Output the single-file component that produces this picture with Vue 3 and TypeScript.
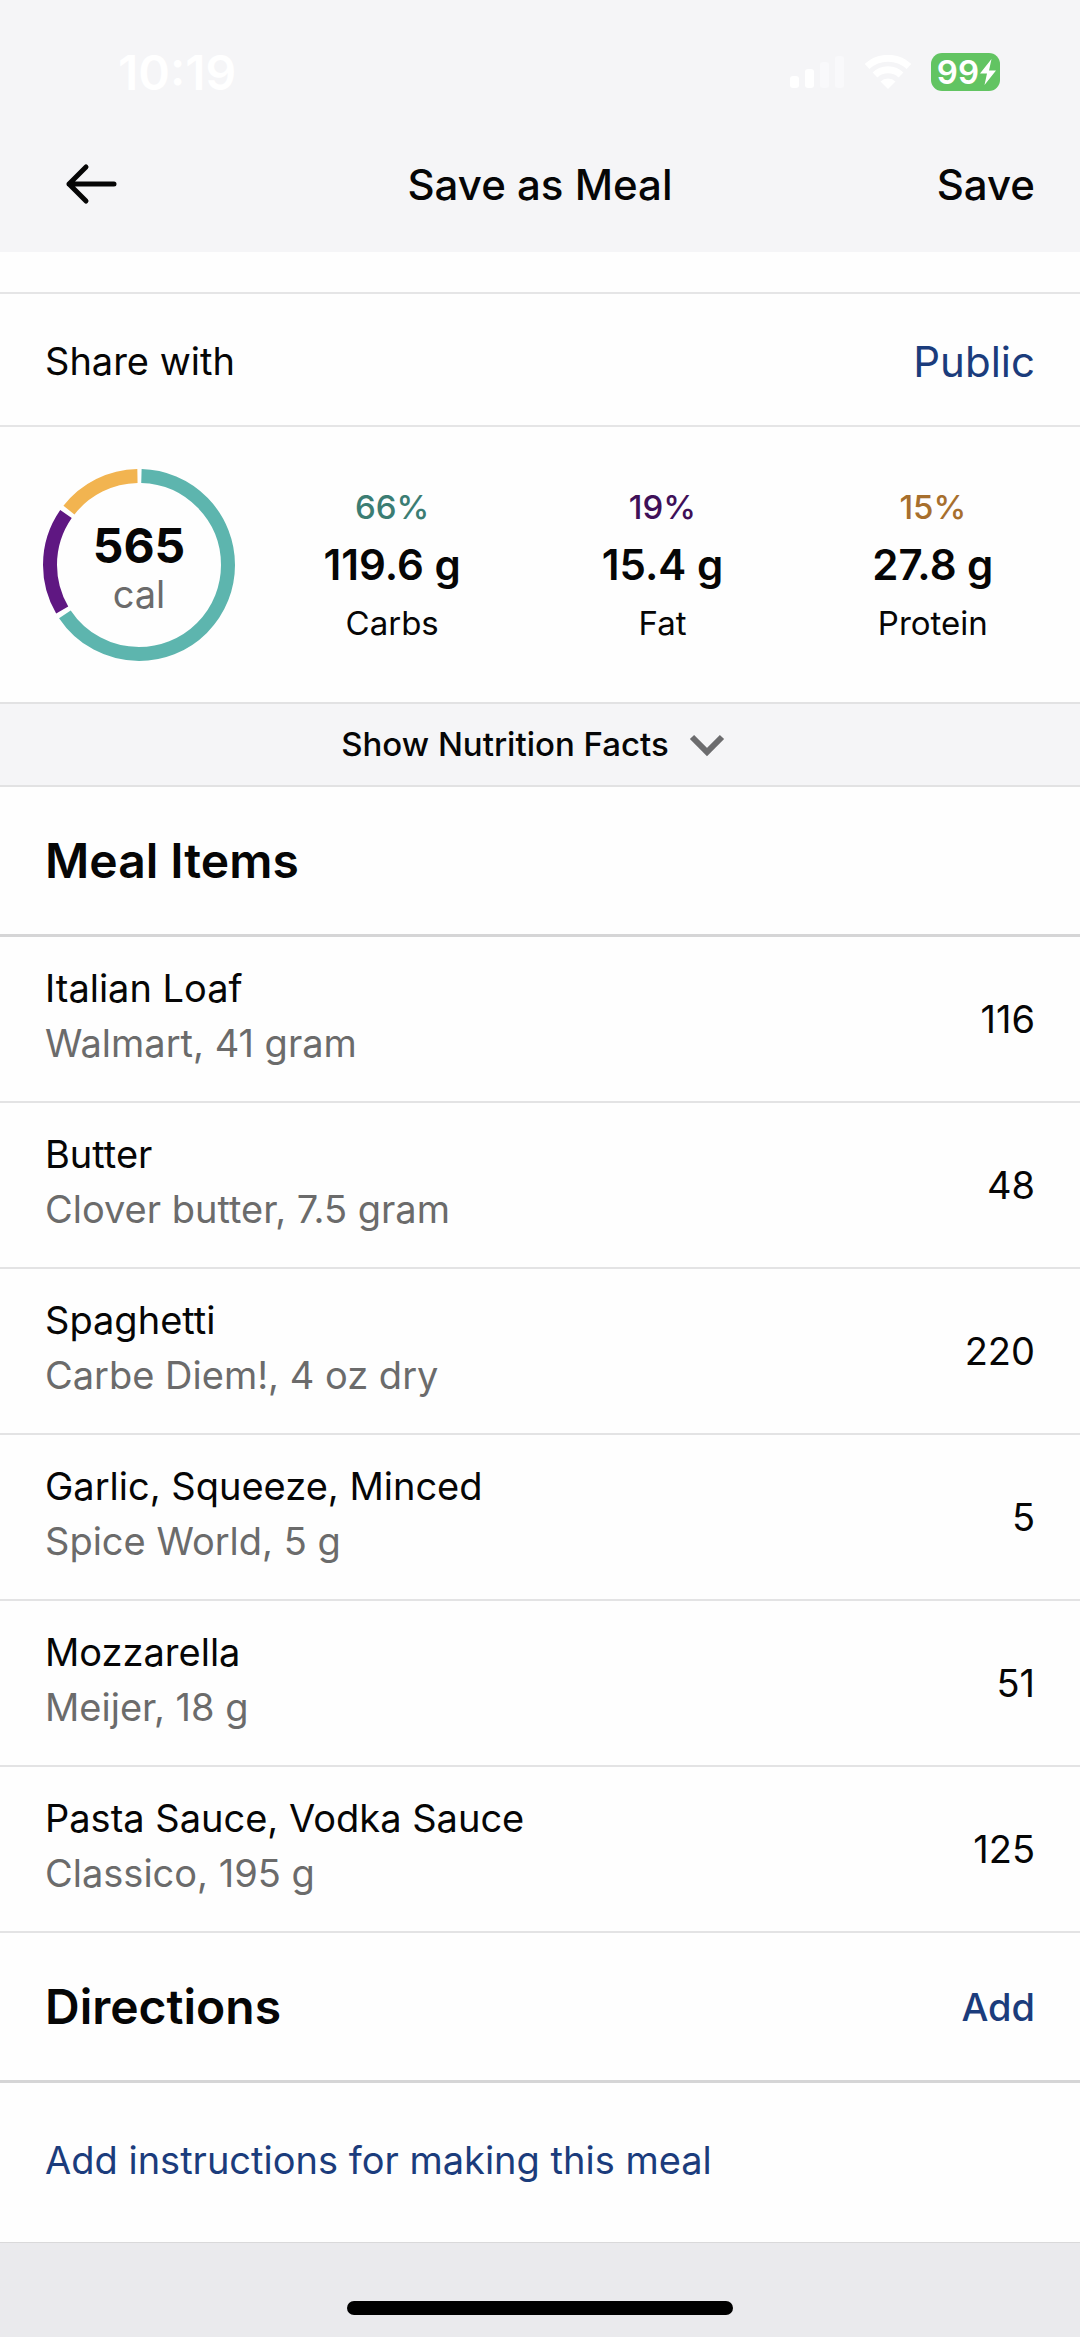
<script setup lang="ts">
import { computed, ref } from 'vue'

interface Macro {
  name: string
  percent: number
  grams: string
  tone: 'carbs' | 'fat' | 'protein'
}

interface MealItem {
  name: string
  detail: string
  calories: number
}

const calories = 565
const visibility = ref('Public')

const macros: Macro[] = [
  { name: 'Carbs', percent: 66, grams: '119.6 g', tone: 'carbs' },
  { name: 'Fat', percent: 19, grams: '15.4 g', tone: 'fat' },
  { name: 'Protein', percent: 15, grams: '27.8 g', tone: 'protein' },
]

const items: MealItem[] = [
  { name: 'Italian Loaf', detail: 'Walmart, 41 gram', calories: 116 },
  { name: 'Butter', detail: 'Clover butter, 7.5 gram', calories: 48 },
  { name: 'Spaghetti', detail: 'Carbe Diem!, 4 oz dry', calories: 220 },
  { name: 'Garlic, Squeeze, Minced', detail: 'Spice World, 5 g', calories: 5 },
  { name: 'Mozzarella', detail: 'Meijer, 18 g', calories: 51 },
  { name: 'Pasta Sauce, Vodka Sauce', detail: 'Classico, 195 g', calories: 125 },
]

const RADIUS = 89
const GAP = 5

// Each macro becomes one dash on the ring, with half a gap left at both ends.
const arcs = computed(() => {
  const length = 2 * Math.PI * RADIUS
  let start = 0
  return macros.map((m) => {
    const share = (m.percent / 100) * length
    const arc = {
      tone: m.tone,
      dash: `${share - GAP} ${length - share + GAP}`,
      offset: -(start + GAP / 2),
    }
    start += share
    return arc
  })
})
</script>

<template>
  <div class="screen">
    <header class="top">
      <div class="status">
        <span class="time">10:19</span>
        <div class="indicators">
          <svg class="signal" viewBox="0 0 56 34" aria-hidden="true">
            <rect x="1" y="21" width="9" height="12" rx="3" />
            <rect x="16" y="14" width="9" height="19" rx="3" />
            <rect class="off" x="31" y="7" width="9" height="26" rx="3" />
            <rect class="off" x="46" y="1" width="9" height="32" rx="3" />
          </svg>
          <svg class="wifi" viewBox="0 0 48 34" aria-hidden="true">
            <path d="M3 11.500A31 31 0 0 1 45 11.500" />
            <path d="M11 20A19 19 0 0 1 37 20" />
            <path class="dot" d="M24 34L16.500 26.500A11 11 0 0 1 31.500 26.500Z" />
          </svg>
          <span class="battery">
            99
            <svg class="bolt" viewBox="0 0 16 28" aria-hidden="true">
              <path d="M11.500 1L0 15.500H7L4.500 27L16 12.500H9Z" />
            </svg>
          </span>
        </div>
      </div>
      <nav class="nav">
        <button class="back" type="button" aria-label="Back">
          <svg viewBox="0 0 52 44" aria-hidden="true">
            <path d="M49 22H4M21 5L4 22L21 39" />
          </svg>
        </button>
        <h1 class="title">Save as Meal</h1>
        <button class="save" type="button">Save</button>
      </nav>
    </header>

    <main class="content">
      <section class="share">
        <span id="share-label" class="body">Share with</span>
        <button class="visibility" type="button" aria-describedby="share-label">{{ visibility }}</button>
      </section>

      <section class="summary">
        <div class="ring">
          <svg viewBox="0 0 192 192" aria-hidden="true">
            <circle
              v-for="arc in arcs"
              :key="arc.tone"
              :class="['arc', arc.tone]"
              cx="96"
              cy="96"
              :r="RADIUS"
              :stroke-dasharray="arc.dash"
              :stroke-dashoffset="arc.offset"
            />
          </svg>
          <div class="total">
            <strong>{{ calories }}</strong>
            <span>cal</span>
          </div>
        </div>
        <div class="macros">
          <div v-for="m in macros" :key="m.name" class="macro">
            <span :class="['percent', m.tone]">{{ m.percent }}%</span>
            <span class="grams">{{ m.grams }}</span>
            <span class="name">{{ m.name }}</span>
          </div>
        </div>
      </section>

      <button class="facts" type="button">
        Show Nutrition Facts
        <svg viewBox="0 0 64 32" aria-hidden="true">
          <path d="M17 8L32 23L47 8" />
        </svg>
      </button>

      <section>
        <div class="heading">
          <h2>Meal Items</h2>
        </div>
        <ul class="items">
          <li v-for="item in items" :key="item.name" class="item">
            <div class="label">
              <span class="body">{{ item.name }}</span>
              <span class="body muted">{{ item.detail }}</span>
            </div>
            <span class="body">{{ item.calories }}</span>
          </li>
        </ul>
      </section>

      <section>
        <div class="heading">
          <h2>Directions</h2>
          <button class="add" type="button">Add</button>
        </div>
        <button class="instructions" type="button">Add instructions for making this meal</button>
      </section>
    </main>

    <footer class="bottom">
      <div class="home"></div>
    </footer>
  </div>
</template>

<style>
body {
  margin: 0;
}
</style>

<style scoped>
.screen {
  display: flex;
  flex-direction: column;
  min-height: 100vh;
  background: #fefefe;
  color: #060606;
  font-family: Inter, "Liberation Sans", sans-serif;
  font-size: 38px;
}

button {
  margin: 0;
  padding: 0;
  border: 0;
  background: none;
  color: inherit;
  font: inherit;
  cursor: pointer;
}

svg {
  display: block;
}

.top {
  padding-bottom: 28px;
  background: #f5f5f7;
}

.status {
  display: flex;
  align-items: center;
  justify-content: space-between;
  height: 144px;
  padding: 0 80px 0 118px;
  box-sizing: border-box;
}

.time {
  color: #fff;
  font-size: 48px;
  font-weight: 600;
}

.indicators {
  display: flex;
  align-items: center;
  gap: 19px;
}

.signal {
  width: 56px;
  height: 34px;
  fill: #fff;
}

.signal .off {
  fill: #f9f9fb;
}

.wifi {
  width: 48px;
  height: 34px;
  fill: none;
  stroke: #fff;
  stroke-width: 7;
}

.wifi .dot {
  fill: #fff;
  stroke: none;
}

.battery {
  display: flex;
  align-items: center;
  gap: 1px;
  height: 38px;
  padding: 0 4px 0 6px;
  border-radius: 11px;
  background: #62c462;
  color: #fff;
  font-size: 33px;
  font-weight: 600;
}

.bolt {
  width: 16px;
  height: 28px;
  fill: #fff;
}

.nav {
  display: grid;
  grid-template-columns: 1fr auto 1fr;
  align-items: center;
  height: 80px;
  padding: 0 45px 0 65px;
}

.back svg {
  width: 52px;
  height: 44px;
  fill: none;
  stroke: #060606;
  stroke-width: 5;
  stroke-linecap: round;
  stroke-linejoin: round;
}

.back {
  justify-self: start;
}

.title {
  margin: 0 20px 0 0;
  font-size: 42px;
  font-weight: 500;
}

.save {
  justify-self: end;
  font-size: 42px;
  font-weight: 500;
}

.body {
  line-height: 55px;
}

.share {
  display: flex;
  align-items: center;
  justify-content: space-between;
  margin-top: 40px;
  padding: 40px 45px 36px;
  border-top: 2px solid #e5e5e6;
  border-bottom: 2px solid #e5e5e6;
}

.visibility {
  color: #1b3c7c;
  font-size: 42px;
  line-height: 55px;
}

.summary {
  display: flex;
  align-items: center;
  padding: 42px 12px 41px 43px;
}

.ring {
  display: grid;
  flex: none;
  width: 192px;
  height: 192px;
}

.ring > * {
  grid-area: 1 / 1;
}

.arc {
  fill: none;
  stroke-width: 14;
  transform: rotate(-90deg);
  transform-origin: center;
}

.arc.carbs {
  stroke: #5db5ae;
}

.arc.fat {
  stroke: #5f1782;
}

.arc.protein {
  stroke: #f2b450;
}

.total {
  display: flex;
  flex-direction: column;
  align-items: center;
  justify-content: center;
  padding-top: 10px;
  line-height: 48px;
}

.total strong {
  font-size: 48px;
  font-weight: 700;
}

.total span {
  color: #6b6b6b;
}

.macros {
  display: grid;
  flex: 1;
  grid-template-columns: repeat(3, 1fr);
  margin-left: 22px;
}

.macro {
  display: flex;
  flex-direction: column;
  align-items: center;
  font-size: 33px;
  line-height: 58px;
}

.grams {
  font-size: 42px;
  font-weight: 600;
}

.percent {
  font-weight: 500;
}

.percent.carbs {
  color: #3b7d73;
}

.percent.fat {
  color: #3f1058;
}

.percent.protein {
  color: #a76f2d;
}

.facts {
  display: flex;
  align-items: center;
  justify-content: center;
  gap: 6px;
  width: 100%;
  padding: 20px 0;
  border-top: 2px solid #e2e2e3;
  border-bottom: 2px solid #e2e2e3;
  background: #f5f5f7;
  font-size: 33px;
  font-weight: 500;
  line-height: 41px;
}

.facts svg {
  width: 64px;
  height: 32px;
  fill: none;
  stroke: #6c6c6e;
  stroke-width: 6;
}

.heading {
  display: flex;
  align-items: center;
  justify-content: space-between;
  padding: 44px 45px 43px;
  border-bottom: 3px solid #d5d5d6;
  line-height: 60px;
}

.heading h2 {
  margin: 0;
  font-size: 48px;
  font-weight: 600;
}

.add {
  color: #1b3c7c;
  font-weight: 500;
}

.items {
  margin: 0;
  padding: 0;
  list-style: none;
}

.item {
  display: flex;
  align-items: center;
  justify-content: space-between;
  padding: 24px 45px;
  border-bottom: 2px solid #e3e3e4;
}

.label {
  display: flex;
  flex-direction: column;
  padding-bottom: 6px;
}

.muted {
  color: #6b6b6b;
}

.instructions {
  display: block;
  width: 100%;
  padding: 50px 45px 54px;
  color: #1b3c7c;
  line-height: 55px;
  text-align: left;
}

.bottom {
  display: flex;
  flex: 1;
  align-items: flex-end;
  justify-content: center;
  padding-bottom: 22px;
  border-top: 1px solid #d9d9da;
  background: #eaeaed;
}

.home {
  width: 386px;
  height: 14px;
  margin-top: 48px;
  border-radius: 7px;
  background: #000;
}
</style>
